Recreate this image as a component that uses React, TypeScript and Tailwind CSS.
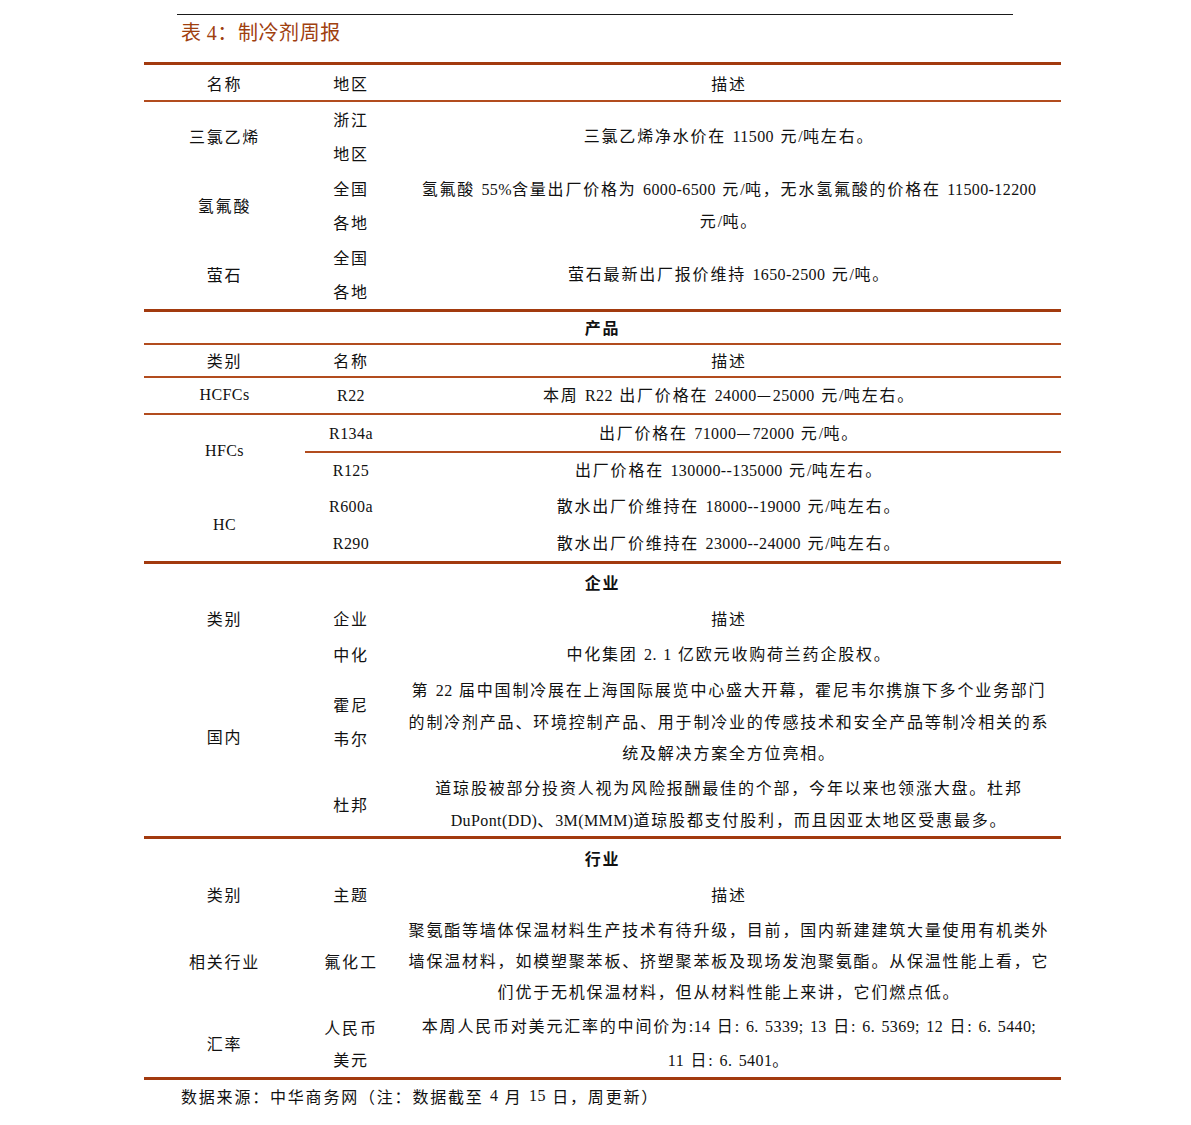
import React from "react";

// ASCII runs are set in a serif face, CJK in Noto Sans CJK
const T = ({ s }: { s: string }) => (
  <>
    {s.split(/([\x20-\x7E]+)/).map((p, i) =>
      !p ? null : /^[\x20-\x7E]+$/.test(p) ? (
        <span
          key={i}
          className="font-['Liberation_Serif',serif] text-[16px] tracking-[0.4px] [word-spacing:2px] whitespace-pre"
        >
          {p}
        </span>
      ) : (
        <span key={i}>{p}</span>
      )
    )}
  </>
);

const Thick = () => <div className="h-[3px] bg-[#a23a0e]" />;
const Thin = () => <div className="h-[1.5px] bg-[#b24c1e]" />;

const Lines = ({ lines, lh }: { lines: string[]; lh: string }) => (
  <div className={`flex flex-col items-center ${lh}`}>
    {lines.map((l, i) => (
      <div key={i} className="whitespace-nowrap">
        <T s={l} />
      </div>
    ))}
  </div>
);

const c1 = "w-[161px] shrink-0 flex items-center justify-center";
const c2 = "w-[92px] shrink-0 flex items-center justify-center";
const c3 = "w-[664px] shrink-0 flex items-center justify-center";

const Header = ({ a, b, h }: { a: string; b: string; h: string }) => (
  <div className={`flex ${h}`}>
    <div className={c1}>{a}</div>
    <div className={c2}>{b}</div>
    <div className={c3}>描述</div>
  </div>
);

const Title = ({ t, h }: { t: string; h: string }) => (
  <div className={`flex items-center justify-center font-bold ${h}`}>{t}</div>
);

const Row = ({
  name,
  desc,
  h,
  lh = "leading-[31px]",
}: {
  name: string[];
  desc: string[];
  h: string;
  lh?: string;
}) => (
  <div className={`flex ${h}`}>
    <div className={c2}>
      <Lines lines={name} lh={name.length > 1 ? "leading-[34px]" : ""} />
    </div>
    <div className={c3}>
      <Lines lines={desc} lh={lh} />
    </div>
  </div>
);

const FullRow = ({
  label,
  name,
  desc,
  h,
  nameLh = "leading-[34px]",
  lh = "leading-[31px]",
}: {
  label: string;
  name: string[];
  desc: string[];
  h: string;
  nameLh?: string;
  lh?: string;
}) => (
  <div className={`flex ${h}`}>
    <div className={c1}>
      <T s={label} />
    </div>
    <div className={c2}>
      <Lines lines={name} lh={nameLh} />
    </div>
    <div className={c3}>
      <Lines lines={desc} lh={lh} />
    </div>
  </div>
);

export default function App() {
  return (
    <div className="w-[1191px] h-[1125px] bg-white pt-[14px] text-[#111] text-[16px] tracking-[1.8px] font-['Noto_Sans_CJK_SC',sans-serif]">
      <div className="ml-[177px] w-[836px] h-px bg-[#1a1a1a]" />
      <div className="h-[47px] pl-[181px] pt-[3px] leading-[28px] text-[20px] tracking-[0.6px] text-[#a0400f]">
        表 <span className="font-['Liberation_Serif',serif]">4</span>：制冷剂周报
      </div>

      <div className="ml-[144px] w-[917px]">
        {/* 原料 */}
        <Thick />
        <div className="flex h-[35px]">
          <div className={c1}>名称</div>
          <div className={c2}>地区</div>
          <div className={c3}>描述</div>
        </div>
        <Thin />
        <FullRow
          label="三氯乙烯"
          name={["浙江", "地区"]}
          desc={["三氯乙烯净水价在 11500 元/吨左右。"]}
          h="h-[69px]"
        />
        <FullRow
          label="氢氟酸"
          name={["全国", "各地"]}
          desc={[
            "氢氟酸 55%含量出厂价格为 6000-6500 元/吨，无水氢氟酸的价格在 11500-12200",
            "元/吨。",
          ]}
          h="h-[69px]"
        />
        <FullRow
          label="萤石"
          name={["全国", "各地"]}
          desc={["萤石最新出厂报价维持 1650-2500 元/吨。"]}
          h="h-[69px]"
        />

        {/* 产品 */}
        <Thick />
        <Title t="产品" h="h-[31.5px]" />
        <Thin />
        <Header a="类别" b="名称" h="h-[31.5px]" />
        <Thin />
        <FullRow
          label="HCFCs"
          name={["R22"]}
          desc={["本周 R22 出厂价格在 24000—25000 元/吨左右。"]}
          h="h-[35.5px]"
        />
        <Thin />
        <div className="flex">
          <div className={c1}>
            <T s="HFCs" />
          </div>
          <div className="flex-1">
            <Row name={["R134a"]} desc={["出厂价格在 71000—72000 元/吨。"]} h="h-[36.5px]" />
            <Thin />
            <Row name={["R125"]} desc={["出厂价格在 130000--135000 元/吨左右。"]} h="h-[35.5px]" />
          </div>
        </div>
        <div className="flex">
          <div className={c1}>
            <T s="HC" />
          </div>
          <div className="flex-1">
            <Row name={["R600a"]} desc={["散水出厂价维持在 18000--19000 元/吨左右。"]} h="h-[36.5px]" />
            <Row name={["R290"]} desc={["散水出厂价维持在 23000--24000 元/吨左右。"]} h="h-[36.5px]" />
          </div>
        </div>

        {/* 企业 */}
        <Thick />
        <Title t="企业" h="h-[35px]" />
        <Header a="类别" b="企业" h="h-[37px]" />
        <div className="flex">
          <div className={c1}>国内</div>
          <div className="flex-1">
            <Row name={["中化"]} desc={["中化集团 2. 1 亿欧元收购荷兰药企股权。"]} h="h-[35px]" />
            <Row
              name={["霍尼", "韦尔"]}
              desc={[
                "第 22 届中国制冷展在上海国际展览中心盛大开幕，霍尼韦尔携旗下多个业务部门",
                "的制冷剂产品、环境控制产品、用于制冷业的传感技术和安全产品等制冷相关的系",
                "统及解决方案全方位亮相。",
              ]}
              h="h-[100px]"
            />
            <Row
              name={["杜邦"]}
              desc={[
                "道琼股被部分投资人视为风险报酬最佳的个部，今年以来也领涨大盘。杜邦",
                "DuPont(DD)、3M(MMM)道琼股都支付股利，而且因亚太地区受惠最多。",
              ]}
              h="h-[65px]"
              lh="leading-[32px]"
            />
          </div>
        </div>

        {/* 行业 */}
        <Thick />
        <Title t="行业" h="h-[37px]" />
        <Header a="类别" b="主题" h="h-[36px]" />
        <FullRow
          label="相关行业"
          name={["氟化工"]}
          desc={[
            "聚氨酯等墙体保温材料生产技术有待升级，目前，国内新建建筑大量使用有机类外",
            "墙保温材料，如模塑聚苯板、挤塑聚苯板及现场发泡聚氨酯。从保温性能上看，它",
            "们优于无机保温材料，但从材料性能上来讲，它们燃点低。",
          ]}
          h="h-[97px]"
        />
        <FullRow
          label="汇率"
          name={["人民币", "美元"]}
          nameLh="leading-[32px]"
          desc={[
            "本周人民币对美元汇率的中间价为:14 日: 6. 5339; 13 日: 6. 5369; 12 日: 6. 5440;",
            "11 日: 6. 5401。",
          ]}
          h="h-[68px]"
          lh="leading-[32px]"
        />
        <Thick />
        <div className="h-[32px] pl-[37px] flex items-center whitespace-nowrap">
          <T s="数据来源：中华商务网（注：数据截至 4 月 15 日，周更新）" />
        </div>
      </div>
    </div>
  );
}
